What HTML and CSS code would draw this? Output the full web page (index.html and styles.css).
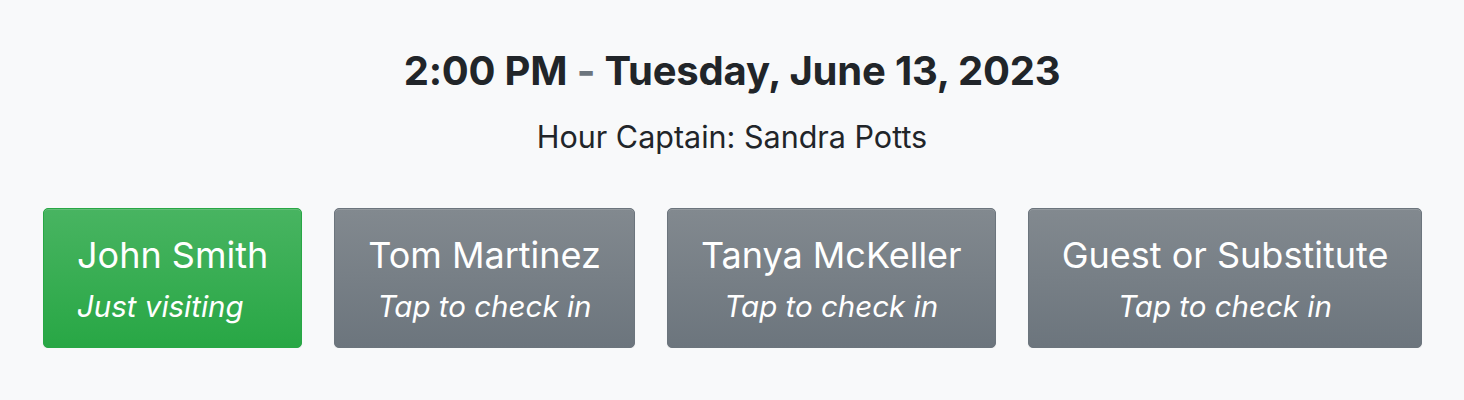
FILE: index.html
```html
<!DOCTYPE html>
<html>
<head>
<meta charset="utf-8">
<link rel="stylesheet" href="styles.css">
</head>
<body>
<main class="page">
  <h1 class="title">2:00 PM <span class="muted">-</span> Tuesday, June 13, 2023</h1>
  <p class="captain">Hour Captain: Sandra Potts</p>
  <div class="buttons">
    <button class="btn btn-success text-left">
      <span class="name">John Smith</span>
      <span class="status">Just visiting</span>
    </button>
    <button class="btn btn-secondary">
      <span class="name">Tom Martinez</span>
      <span class="status">Tap to check in</span>
    </button>
    <button class="btn btn-secondary">
      <span class="name">Tanya McKeller</span>
      <span class="status">Tap to check in</span>
    </button>
    <button class="btn btn-secondary">
      <span class="name">Guest or Substitute</span>
      <span class="status">Tap to check in</span>
    </button>
  </div>
</main>
</body>
</html>
```

FILE: styles.css
```css
html, body {
  margin: 0;
  padding: 0;
  background: #f8f9fa;
}
body {
  font-family: Inter, "Noto Sans", sans-serif;
  color: #212529;
}
.page {
  display: flex;
  flex-direction: column;
  align-items: center;
  padding-top: 47px;
}
.title {
  margin: 0;
  font-size: 40px;
  font-weight: 700;
  line-height: 48px;
  letter-spacing: -0.2px;
}
.muted {
  color: #6c757d;
}
.captain {
  margin: 22px 0 0;
  font-size: 30.5px;
  line-height: 40px;
}
.buttons {
  margin-top: 51px;
  display: flex;
  gap: 32px;
  align-self: stretch;
  padding-left: 43px;
}
.btn {
  display: flex;
  flex-direction: column;
  align-items: center;
  padding: 22px 33px 21px;
  border: 1px solid;
  border-radius: 5px;
  color: #fff;
  font-family: inherit;
  box-shadow: inset 0 1px 0 rgba(255,255,255,.15), 0 1px 1px rgba(0,0,0,.075);
  cursor: pointer;
}
.btn.text-left {
  align-items: flex-start;
}
.btn-success {
  background: #28a745 linear-gradient(180deg, #48b461, #28a745) repeat-x;
  border-color: #28a745;
}
.btn-secondary {
  background: #6c757d linear-gradient(180deg, #82898f, #6c757d) repeat-x;
  border-color: #6c757d;
}
.name {
  font-size: 36px;
  line-height: 48px;
}
.status {
  font-size: 29.5px;
  font-style: italic;
  line-height: 40px;
  margin-top: 7px;
}
```
